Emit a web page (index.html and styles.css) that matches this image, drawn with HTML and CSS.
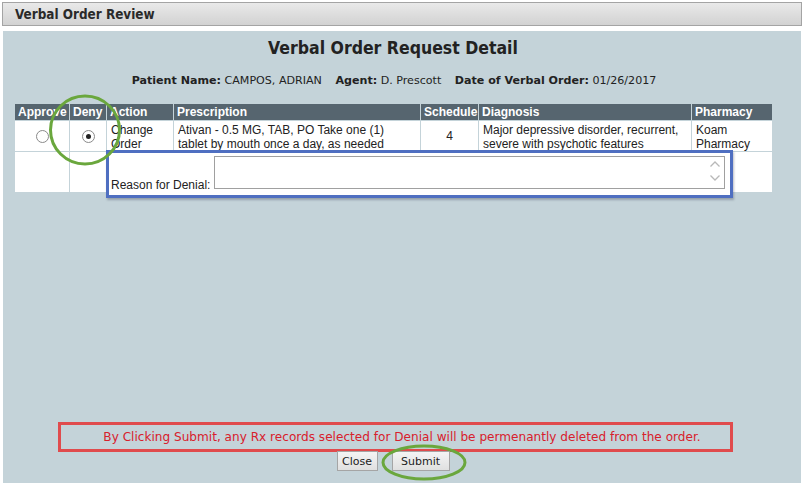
FILE: index.html
```html
<!DOCTYPE html>
<html>
<head>
<meta charset="utf-8">
<link rel="stylesheet" href="styles.css">
</head>
<body>
<div class="page">
  <div class="titlebar">Verbal Order Review</div>
  <div class="panel">
    <h1 class="heading">Verbal Order Request Detail</h1>
    <div class="meta">
      <span class="lbl">Patient Name:</span> CAMPOS, ADRIAN
      <span class="lbl sp">Agent:</span> D. Prescott
      <span class="lbl sp">Date of Verbal Order:</span> 01/26/2017
    </div>
    <div class="tablewrap">
      <div class="grid">
        <div class="th">Approve</div>
        <div class="th">Deny</div>
        <div class="th">Action</div>
        <div class="th">Prescription</div>
        <div class="th">Schedule</div>
        <div class="th">Diagnosis</div>
        <div class="th">Pharmacy</div>

        <div class="td center"><span class="radio"></span></div>
        <div class="td center"><span class="radio checked"></span></div>
        <div class="td">Change<br>Order</div>
        <div class="td">Ativan - 0.5 MG, TAB, PO Take one (1)<br>tablet by mouth once a day, as needed</div>
        <div class="td center">4</div>
        <div class="td">Major depressive disorder, recurrent,<br>severe with psychotic features</div>
        <div class="td">Koam<br>Pharmacy</div>

        <div class="td"></div>
        <div class="td"></div>
        <div class="td wide"></div>
      </div>
      <div class="reason">
        <span class="reason-label">Reason for Denial:</span>
        <div class="textarea">
          <div class="scroll">
            <svg width="12" height="8" viewBox="0 0 12 8"><path d="M1.5 6.5 L6 2 L10.5 6.5" fill="none" stroke="#b8b8b8" stroke-width="1.3"/></svg>
            <svg width="12" height="8" viewBox="0 0 12 8"><path d="M1.5 1.5 L6 6 L10.5 1.5" fill="none" stroke="#b8b8b8" stroke-width="1.3"/></svg>
          </div>
        </div>
      </div>
    </div>
    <div class="spacer"></div>
    <div class="warning">By Clicking Submit, any Rx records selected for Denial will be permenantly deleted from the order.</div>
    <div class="buttons">
      <button class="btn">Close</button>
      <button class="btn">Submit</button>
    </div>
  </div>
  <svg class="marks" width="804" height="485" viewBox="0 0 804 485">
    <ellipse cx="85" cy="130" rx="34.5" ry="34" fill="none" stroke="#6aa73d" stroke-width="3"/>
    <ellipse cx="424" cy="462.5" rx="41" ry="16.5" fill="none" stroke="#6aa73d" stroke-width="3"/>
  </svg>
</div>
</body>
</html>
```

FILE: styles.css
```css
html, body {
  margin: 0;
  padding: 0;
  background: #ffffff;
}
.page {
  position: relative;
  width: 804px;
  height: 485px;
  overflow: hidden;
  font-family: "DejaVu Sans Condensed", "DejaVu Sans", sans-serif;
  color: #222;
}
.titlebar {
  margin: 2px 2px 0 2px;
  height: 22px;
  border: 1px solid #a4a4a4;
  background: linear-gradient(#e9e9e9, #d2d2d2);
  font-weight: bold;
  font-size: 13.4px;
  line-height: 23px;
  padding-left: 12px;
  color: #2a2a2a;
}
.panel {
  margin: 5px 3px 0 3px;
  height: 452px;
  background: #c4d3d9;
  display: flex;
  flex-direction: column;
  box-sizing: border-box;
}
.heading {
  margin: 7px 0 0 0;
  text-align: center;
  font-size: 17.5px;
  font-weight: bold;
  line-height: 20px;
  color: #222;
  padding-right: 18px;
}
.meta {
  margin-top: 16px;
  text-align: center;
  font-family: "DejaVu Sans", sans-serif;
  font-size: 11.1px;
  line-height: 14px;
  color: #222;
  padding-right: 16px;
}
.lbl { font-weight: bold; }
.sp { margin-left: 10px; }
.tablewrap {
  position: relative;
  margin: 16px 0 0 12px;
  width: 760px;
}
.grid {
  display: grid;
  grid-template-columns: 54px 36px 66px 246px 57px 212px 80px;
  grid-template-rows: 16px 30px 40px;
  column-gap: 1px;
  row-gap: 1px;
  font-family: "Liberation Sans", Arial, sans-serif;
  font-size: 12px;
}
.th {
  background: #56656f;
  color: #fff;
  font-weight: bold;
  line-height: 16px;
  padding-left: 3px;
  white-space: nowrap;
  overflow: hidden;
}
.td {
  background: #fff;
  color: #222;
  line-height: 14px;
  padding: 2px 4px 0 4px;
  overflow: hidden;
}
.td.center {
  display: flex;
  align-items: center;
  justify-content: center;
  padding: 0;
}
.td.wide { grid-column: 3 / 8; }
.radio {
  display: inline-block;
  width: 11px;
  height: 11px;
  border: 1px solid #8a8a8a;
  border-radius: 50%;
  background: #fff;
  position: relative;
  box-sizing: content-box;
}
.radio.checked::after {
  content: "";
  position: absolute;
  left: 3px;
  top: 3px;
  width: 5px;
  height: 5px;
  border-radius: 50%;
  background: #222;
}
.reason {
  position: absolute;
  left: 91px;
  top: 46px;
  width: 621px;
  height: 42px;
  border: 3px solid #4f6fc1;
  background: #fff;
  box-shadow: 1px 2px 2px rgba(60, 70, 90, 0.35);
  display: flex;
  align-items: flex-end;
  font-family: "Liberation Sans", Arial, sans-serif;
  font-size: 12px;
  color: #222;
}
.reason-label {
  margin: 0 4px 3px 2px;
  line-height: 14px;
}
.textarea {
  position: absolute;
  left: 105px;
  top: 3px;
  width: 509px;
  height: 31px;
  border: 1px solid #a0a0a0;
  background: #fff;
}
.scroll {
  position: absolute;
  right: 3px;
  top: 3px;
  width: 12px;
  display: flex;
  flex-direction: column;
  gap: 6px;
}
.spacer { flex: 1; }
.warning {
  margin: 0 0 0 55px;
  width: 675px;
  height: 30px;
  border: 3px solid #e04b4d;
  font-family: "DejaVu Sans", sans-serif;
  font-size: 12.1px;
  line-height: 24px;
  color: #d8202c;
  text-align: center;
  padding-left: 13px;
  box-sizing: border-box;
  white-space: nowrap;
}
.buttons {
  display: flex;
  justify-content: center;
  gap: 14px;
  padding-right: 18px;
  margin-top: -1px;
  margin-bottom: 12px;
}
.btn {
  font-family: "DejaVu Sans", sans-serif;
  font-size: 11px;
  height: 20px;
  padding: 0 4px;
  border: 1px solid #a5a5a5;
  background: linear-gradient(#f4f4f4, #e0e0e0);
  color: #222;
  border-radius: 0;
}
.btn:first-child { width: 41px; }
.btn:last-child { width: 58px; }
.marks {
  position: absolute;
  left: 0;
  top: 0;
  pointer-events: none;
}
```
